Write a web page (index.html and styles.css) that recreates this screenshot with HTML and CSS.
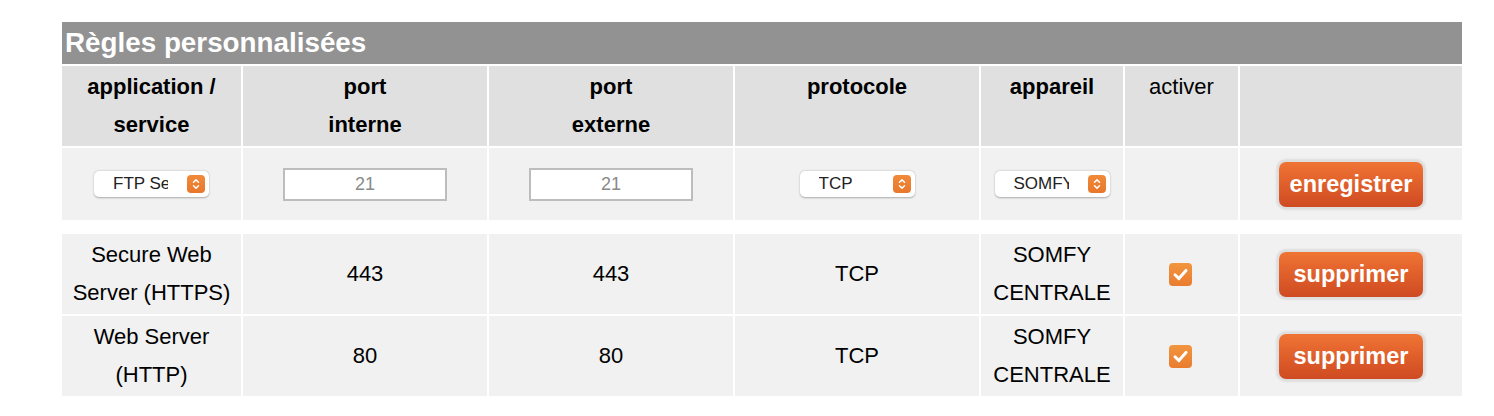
FILE: index.html
```html
<!DOCTYPE html>
<html lang="fr">
<head>
<meta charset="utf-8">
<title>Règles personnalisées</title>
<link rel="stylesheet" href="styles.css">
</head>
<body>
<div class="rules">
  <div class="title">Règles personnalisées</div>

  <div class="row head">
    <div class="cell"><b>application /<br>service</b></div>
    <div class="cell"><b>port<br>interne</b></div>
    <div class="cell"><b>port<br>externe</b></div>
    <div class="cell"><b>protocole</b></div>
    <div class="cell"><b>appareil</b></div>
    <div class="cell">activer</div>
    <div class="cell"></div>
  </div>

  <div class="row edit">
    <div class="cell">
      <div class="select"><span class="sel-text">FTP Server</span><svg class="sel-arrow" viewBox="0 0 18 18"><path d="M6.5 7.2 9 4.9 11.5 7.2M6.5 10.8 9 13.1 11.5 10.8"/></svg></div>
    </div>
    <div class="cell"><input class="port" type="text" placeholder="21"></div>
    <div class="cell"><input class="port" type="text" placeholder="21"></div>
    <div class="cell">
      <div class="select"><span class="sel-text">TCP</span><svg class="sel-arrow" viewBox="0 0 18 18"><path d="M6.5 7.2 9 4.9 11.5 7.2M6.5 10.8 9 13.1 11.5 10.8"/></svg></div>
    </div>
    <div class="cell">
      <div class="select"><span class="sel-text">SOMFY CENTRALE</span><svg class="sel-arrow" viewBox="0 0 18 18"><path d="M6.5 7.2 9 4.9 11.5 7.2M6.5 10.8 9 13.1 11.5 10.8"/></svg></div>
    </div>
    <div class="cell"></div>
    <div class="cell"><button class="btn">enregistrer</button></div>
  </div>

  <div class="row data first">
    <div class="cell">Secure Web<br>Server (HTTPS)</div>
    <div class="cell">443</div>
    <div class="cell">443</div>
    <div class="cell">TCP</div>
    <div class="cell">SOMFY<br>CENTRALE</div>
    <div class="cell"><span class="check"><svg viewBox="0 0 23 23"><path d="M6 11.8 9.9 15.6 17 7.4"/></svg></span></div>
    <div class="cell"><button class="btn">supprimer</button></div>
  </div>

  <div class="row data">
    <div class="cell">Web Server<br>(HTTP)</div>
    <div class="cell">80</div>
    <div class="cell">80</div>
    <div class="cell">TCP</div>
    <div class="cell">SOMFY<br>CENTRALE</div>
    <div class="cell"><span class="check"><svg viewBox="0 0 23 23"><path d="M6 11.8 9.9 15.6 17 7.4"/></svg></span></div>
    <div class="cell"><button class="btn">supprimer</button></div>
  </div>
</div>
</body>
</html>
```

FILE: styles.css
```css
html, body {
  margin: 0;
  padding: 0;
  background: #ffffff;
}

body {
  font-family: "Liberation Sans", Arial, sans-serif;
  color: #000;
  padding: 22px 0 0 62px;
}

.rules {
  width: 1400px;
  display: flex;
  flex-direction: column;
  gap: 2px;
}

.title {
  height: 42px;
  line-height: 42px;
  background: #929292;
  color: #fff;
  font-weight: bold;
  font-size: 27.8px;
  padding-left: 3px;
}

.row {
  display: grid;
  grid-template-columns: 179px 244px 244px 244px 142px 113px 222px;
  column-gap: 2px;
}

.cell {
  font-size: 22px;
  line-height: 38px;
  text-align: center;
}

.head .cell {
  background: #e0e0e0;
  height: 80px;
  padding-top: 2px;
  box-sizing: border-box;
}

.head b {
  font-weight: bold;
}

.edit .cell {
  background: #f1f1f1;
  height: 72px;
  display: flex;
  align-items: center;
  justify-content: center;
}

.data.first {
  margin-top: 12px;
}

.data .cell {
  background: #f1f1f1;
  height: 80px;
  display: flex;
  align-items: center;
  justify-content: center;
}

.select {
  width: 115px;
  height: 26px;
  box-sizing: border-box;
  background: #fff;
  border-radius: 5px;
  box-shadow: 0 0.5px 2px rgba(0, 0, 0, 0.3);
  display: flex;
  align-items: center;
  padding: 0 4px 0 19px;
  margin-top: -1px;
}

.sel-text {
  flex: 1;
  width: 0;
  overflow: hidden;
  white-space: nowrap;
  text-align: left;
  font-size: 17px;
  line-height: 26px;
  color: #222;
  margin-right: 19px;
}

.sel-arrow {
  width: 18px;
  height: 18px;
  flex: none;
  background: linear-gradient(#f08a3a, #e8772c);
  border-radius: 4px;
}

.sel-arrow path {
  fill: none;
  stroke: #fff;
  stroke-width: 1.5;
  stroke-linecap: round;
  stroke-linejoin: round;
}

.port {
  width: 164px;
  height: 33px;
  box-sizing: border-box;
  border: 2px solid #bdbdbd;
  background: #fff;
  font-family: "Liberation Sans", Arial, sans-serif;
  font-size: 18px;
  text-align: center;
  padding: 0;
  margin: 0;
  outline: none;
}

.port::placeholder {
  color: #8a8a8a;
}

.btn {
  width: 144px;
  height: 45px;
  box-sizing: border-box;
  border: 0;
  border-radius: 7px;
  background: linear-gradient(#ef7434, #cf4a22);
  box-shadow: 0 0 0 2px #dedede, 0 0 2px 3px rgba(0, 0, 0, 0.08);
  color: #fff;
  font-family: "Liberation Sans", Arial, sans-serif;
  font-weight: bold;
  font-size: 23.5px;
  padding: 0;
  cursor: pointer;
}

.check {
  width: 23px;
  height: 23px;
  border-radius: 4px;
  background: linear-gradient(#f2953f, #e97c2f);
  display: block;
  margin-left: -3px;
}

.check svg {
  width: 23px;
  height: 23px;
  display: block;
}

.check path {
  fill: none;
  stroke: #fff;
  stroke-width: 3;
  stroke-linecap: round;
  stroke-linejoin: round;
}
```
